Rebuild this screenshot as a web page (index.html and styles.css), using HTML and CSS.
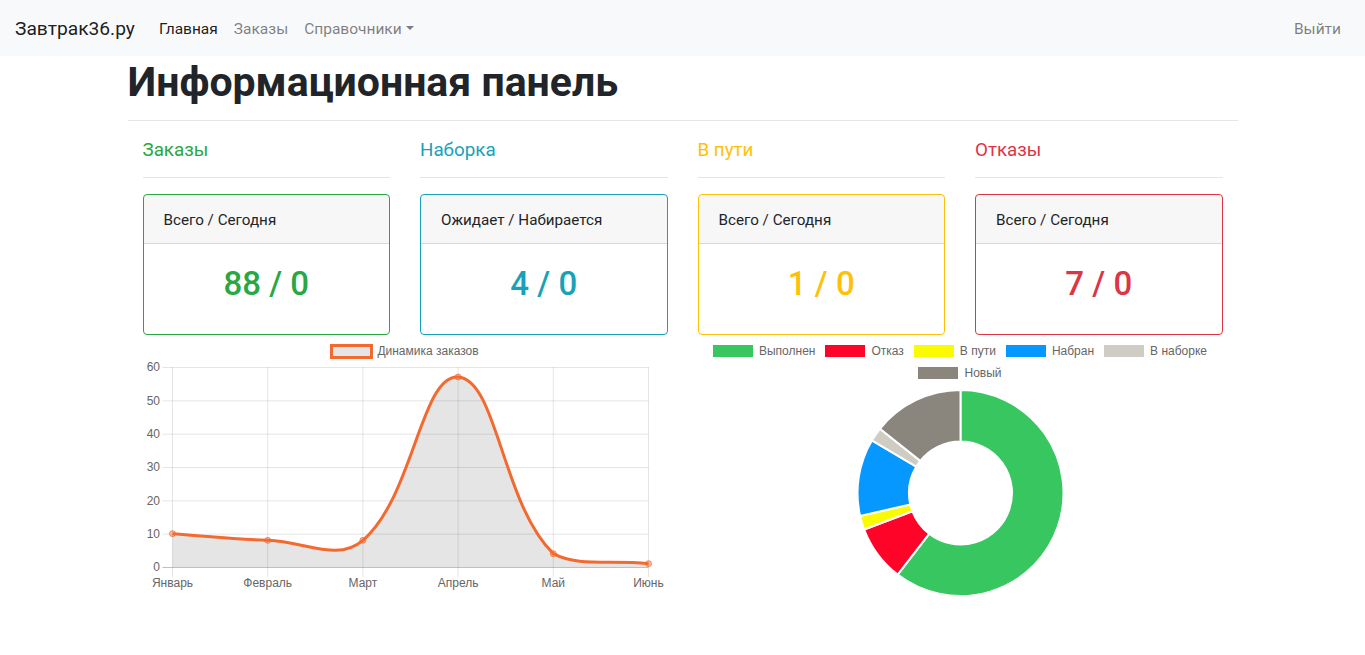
FILE: index.html
```html
<!DOCTYPE html>
<html lang="ru">
<head>
<meta charset="utf-8">
<title>Информационная панель</title>
<link rel="stylesheet" href="styles.css">
</head>
<body>
<nav class="navbar">
  <a class="brand" href="#">Завтрак36.ру</a>
  <ul class="nav">
    <li><a class="active" href="#">Главная</a></li>
    <li><a href="#">Заказы</a></li>
    <li><a href="#">Справочники<span class="caret"></span></a></li>
  </ul>
  <a class="logout" href="#">Выйти</a>
</nav>

<main class="container">
  <h1 class="title">Информационная панель</h1>
  <hr>
  <div class="stats">
    <section class="stat stat-success">
      <h5>Заказы</h5>
      <hr>
      <div class="card">
        <div class="card-header">Всего / Сегодня</div>
        <div class="card-body"><h2>88 / 0</h2></div>
      </div>
    </section>
    <section class="stat stat-info">
      <h5>Наборка</h5>
      <hr>
      <div class="card">
        <div class="card-header">Ожидает / Набирается</div>
        <div class="card-body"><h2>4 / 0</h2></div>
      </div>
    </section>
    <section class="stat stat-warning">
      <h5>В пути</h5>
      <hr>
      <div class="card">
        <div class="card-header">Всего / Сегодня</div>
        <div class="card-body"><h2>1 / 0</h2></div>
      </div>
    </section>
    <section class="stat stat-danger">
      <h5>Отказы</h5>
      <hr>
      <div class="card">
        <div class="card-header">Всего / Сегодня</div>
        <div class="card-body"><h2>7 / 0</h2></div>
      </div>
    </section>
  </div>

  <div class="charts">
    <div class="chart">
      <div class="legend">
        <div class="legend-item"><span class="swatch swatch-line"></span>Динамика заказов</div>
      </div>
      <svg class="plot" width="525" height="230" viewBox="0 0 525 230">
        <g class="grid">
          <line x1="29.5" y1="0" x2="29.5" y2="210"/>
          <line x1="124.7" y1="0" x2="124.7" y2="210"/>
          <line x1="219.9" y1="0" x2="219.9" y2="210"/>
          <line x1="315.1" y1="0" x2="315.1" y2="210"/>
          <line x1="410.3" y1="0" x2="410.3" y2="210"/>
          <line x1="505.5" y1="0" x2="505.5" y2="210"/>
          <line x1="19.5" y1="0.5" x2="505.5" y2="0.5"/>
          <line x1="19.5" y1="33.83" x2="505.5" y2="33.83"/>
          <line x1="19.5" y1="67.17" x2="505.5" y2="67.17"/>
          <line x1="19.5" y1="100.5" x2="505.5" y2="100.5"/>
          <line x1="19.5" y1="133.83" x2="505.5" y2="133.83"/>
          <line x1="19.5" y1="167.17" x2="505.5" y2="167.17"/>
        </g>
        <line class="zero" x1="19.5" y1="200.5" x2="505.5" y2="200.5"/>
        <path class="area" d="M29.5,166.67 C67.58,169.33 86.58,172 124.7,173.33 C162.74,174.66 194.39,195.22 219.9,173.33 C270.55,129.88 278.16,7.41 315.1,10 C354.32,12.75 358.74,136.12 410.3,186.67 C434.9,200 467.42,192.67 505.5,196.67 L505.5,200 L29.5,200 Z"/>
        <path class="curve" d="M29.5,166.67 C67.58,169.33 86.58,172 124.7,173.33 C162.74,174.66 194.39,195.22 219.9,173.33 C270.55,129.88 278.16,7.41 315.1,10 C354.32,12.75 358.74,136.12 410.3,186.67 C434.9,200 467.42,192.67 505.5,196.67"/>
        <g class="points">
          <circle cx="29.5" cy="166.67" r="3"/>
          <circle cx="124.7" cy="173.33" r="3"/>
          <circle cx="219.9" cy="173.33" r="3"/>
          <circle cx="315.1" cy="10" r="3"/>
          <circle cx="410.3" cy="186.67" r="3"/>
          <circle cx="505.5" cy="196.67" r="3"/>
        </g>
        <g class="yticks">
          <text x="17" y="4.3">60</text>
          <text x="17" y="37.6">50</text>
          <text x="17" y="71">40</text>
          <text x="17" y="104.3">30</text>
          <text x="17" y="137.6">20</text>
          <text x="17" y="171">10</text>
          <text x="17" y="204.3">0</text>
        </g>
        <g class="xticks">
          <text x="29.5" y="220">Январь</text>
          <text x="124.7" y="220">Февраль</text>
          <text x="219.9" y="220">Март</text>
          <text x="315.1" y="220">Апрель</text>
          <text x="410.3" y="220">Май</text>
          <text x="505.5" y="220">Июнь</text>
        </g>
      </svg>
    </div>

    <div class="chart">
      <div class="legend">
        <div class="legend-item"><span class="swatch c-done"></span>Выполнен</div>
        <div class="legend-item"><span class="swatch c-refused"></span>Отказ</div>
        <div class="legend-item"><span class="swatch c-way"></span>В пути</div>
        <div class="legend-item"><span class="swatch c-picked"></span>Набран</div>
        <div class="legend-item"><span class="swatch c-picking"></span>В наборке</div>
        <div class="legend-item"><span class="swatch c-new"></span>Новый</div>
      </div>
      <svg class="donut" width="525" height="208" viewBox="0 0 525 208">
        <path class="c-done" d="M262.5,1 A103,103 0 1 1 199.69,185.64 L231.10,144.82 A51.5,51.5 0 1 0 262.5,52.5 Z"/>
        <path class="c-refused" d="M199.69,185.64 A103,103 0 0 1 166.19,140.52 L214.35,122.26 A51.5,51.5 0 0 0 231.10,144.82 Z"/>
        <path class="c-way" d="M166.19,140.52 A103,103 0 0 1 162.09,126.93 L212.29,115.46 A51.5,51.5 0 0 0 214.35,122.26 Z"/>
        <path class="c-picked" d="M162.09,126.93 A103,103 0 0 1 173.90,51.47 L218.20,77.73 A51.5,51.5 0 0 0 212.29,115.46 Z"/>
        <path class="c-picking" d="M173.90,51.47 A103,103 0 0 1 181.97,39.78 L222.24,71.89 A51.5,51.5 0 0 0 218.20,77.73 Z"/>
        <path class="c-new" d="M181.97,39.78 A103,103 0 0 1 262.5,1 L262.5,52.5 A51.5,51.5 0 0 0 222.24,71.89 Z"/>
      </svg>
    </div>
  </div>
</main>
</body>
</html>
```

FILE: styles.css
```css
* { box-sizing: border-box; }

body {
  margin: 0;
  font-family: Roboto, "Noto Sans", sans-serif;
  font-size: 16px;
  line-height: 1.5;
  color: #212529;
  background: #fff;
}

a { text-decoration: none; }

/* navbar */
.navbar {
  display: flex;
  align-items: center;
  height: 56px;
  padding: 2px 16px 0 15px;
  background: #f8f9fa;
}
.brand {
  font-size: 19.2px;
  line-height: 30px;
  color: rgba(0, 0, 0, .9);
  margin-right: 16px;
}
.nav {
  display: flex;
  flex: 1;
  list-style: none;
  margin: 0;
  padding: 0;
}
.nav a, .logout {
  display: block;
  padding: 8px;
  font-size: 15.5px;
  line-height: 24px;
  color: rgba(0, 0, 0, .5);
}
.nav a.active { color: rgba(0, 0, 0, .9); }
.caret {
  display: inline-block;
  margin-left: .255em;
  vertical-align: .255em;
  border-top: .3em solid;
  border-left: .3em solid transparent;
  border-right: .3em solid transparent;
}

/* content */
.container {
  width: 1110px;
  margin: 0 auto;
}
.title {
  margin: 0 0 8px;
  padding-top: 2px;
  height: 48px;
  font-size: 41px;
  font-weight: 700;
  line-height: 48px;
}
hr {
  margin: 16px 0;
  border: 0;
  border-top: 1px solid rgba(0, 0, 0, .1);
}

.stats {
  display: grid;
  grid-template-columns: repeat(4, 1fr);
  column-gap: 30px;
  padding: 0 15px;
}
.stat h5 {
  margin: 0 0 8px;
  padding-top: 3px;
  height: 24px;
  font-size: 18.8px;
  font-weight: 400;
  line-height: 21px;
}
.card {
  border: 1px solid;
  border-radius: 4px;
  overflow: hidden;
}
.card-header {
  padding: 13px 20px 11px;
  font-size: 15.2px;
  line-height: 24px;
  background: rgba(0, 0, 0, .03);
  border-bottom: 1px solid rgba(0, 0, 0, .125);
}
.card-body {
  padding: 20px;
  text-align: center;
}
.card-body h2 {
  margin: 0 0 12px;
  padding-top: 1px;
  height: 38.4px;
  font-size: 33px;
  font-weight: 500;
  line-height: 38px;
}

.stat-success h5, .stat-success h2 { color: #28a745; }
.stat-success .card { border-color: #28a745; }
.stat-info h5, .stat-info h2 { color: #17a2b8; }
.stat-info .card { border-color: #17a2b8; }
.stat-warning h5, .stat-warning h2 { color: #ffc107; }
.stat-warning .card { border-color: #ffc107; }
.stat-danger h5, .stat-danger h2 { color: #dc3545; }
.stat-danger .card { border-color: #dc3545; }

/* charts */
.charts {
  display: grid;
  grid-template-columns: 1fr 1fr;
  column-gap: 30px;
  padding: 0 15px;
}
.chart {
  height: 262px;
  display: flex;
  flex-direction: column;
}
.legend {
  display: flex;
  flex-wrap: wrap;
  justify-content: center;
  column-gap: 10px;
  row-gap: 10px;
  padding-top: 10px;
  margin-bottom: 10px;
  font-family: "Liberation Sans", Arial, sans-serif;
  font-size: 12px;
  line-height: 12px;
  color: #666;
}
.legend-item {
  display: flex;
  align-items: center;
  height: 12px;
}
.swatch {
  display: inline-block;
  width: 40px;
  height: 12px;
  margin-right: 6px;
}
.swatch-line {
  width: 43px;
  height: 15px;
  margin: -1.5px 4.5px -1.5px -1.5px;
  border: 3px solid #f26a2f;
  background: #e5e5e5;
}

.plot, .donut { overflow: visible; display: block; }

.grid line { stroke: rgba(0, 0, 0, .1); stroke-width: 1; }
.zero { stroke: rgba(0, 0, 0, .25); stroke-width: 1; }
.area { fill: rgba(0, 0, 0, .1); }
.curve { fill: none; stroke: #f26a2f; stroke-width: 3; }
.points circle { fill: rgba(242, 106, 47, .45); stroke: rgba(242, 106, 47, .7); stroke-width: 1; }
.yticks text, .xticks text {
  font-family: "Liberation Sans", Arial, sans-serif;
  font-size: 12px;
  fill: #666;
}
.yticks text { text-anchor: end; }
.xticks text { text-anchor: middle; }

.donut path { stroke: #fff; stroke-width: 2; stroke-linejoin: bevel; }

.c-done { background: #37c660; fill: #37c660; }
.c-refused { background: #ff0429; fill: #ff0429; }
.c-way { background: #fafa00; fill: #fafa00; }
.c-picked { background: #0798ff; fill: #0798ff; }
.c-picking { background: #cfccc3; fill: #cfccc3; }
.c-new { background: #8a867e; fill: #8a867e; }
```
